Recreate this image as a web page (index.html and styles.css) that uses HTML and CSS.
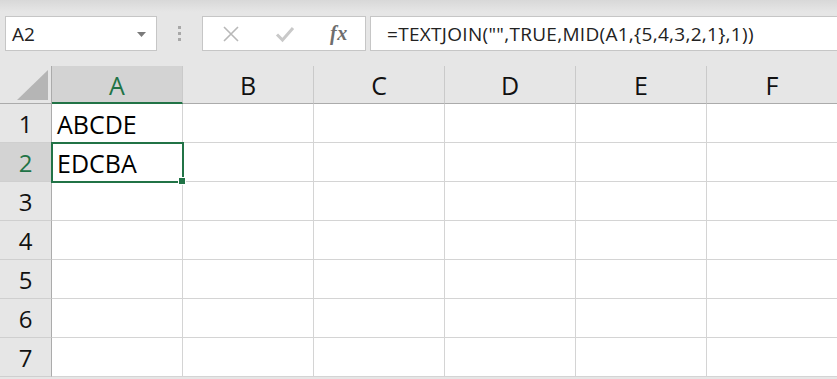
FILE: index.html
```html
<!DOCTYPE html>
<html>
<head>
<meta charset="utf-8">
<link rel="stylesheet" href="styles.css">
</head>
<body>
<div class="app">
  <div class="toolbar">
    <div class="namebox">
      <span class="name">A2</span>
      <svg class="dd" width="9" height="5" viewBox="0 0 9 5"><polygon points="0,0 9,0 4.5,5" fill="#7a7a7a"/></svg>
    </div>
    <div class="sep"><span></span><span></span><span></span></div>
    <div class="btns">
      <svg class="ic" width="18" height="18" viewBox="0 0 18 18"><path d="M2 2 L16 16 M16 2 L2 16" stroke="#b8b8b8" stroke-width="1.6" fill="none"/></svg>
      <svg class="ic" width="20" height="18" viewBox="0 0 20 18"><path d="M2 9.5 L7.5 15 L18 3" stroke="#c9c9c9" stroke-width="3" fill="none"/></svg>
      <span class="fx">fx</span>
    </div>
    <div class="formula">=TEXTJOIN("",TRUE,MID(A1,{5,4,3,2,1},1))</div>
  </div>
  <div class="grid">
    <div class="corner"><svg width="51" height="38" viewBox="0 0 51 38"><polygon points="17,34 48,34 48,4" fill="#b5b5b5"/></svg></div>
    <div class="ch sel">A</div>
    <div class="ch">B</div>
    <div class="ch">C</div>
    <div class="ch">D</div>
    <div class="ch">E</div>
    <div class="ch last">F</div>

    <div class="rh">1</div>
    <div class="c">ABCDE</div><div class="c"></div><div class="c"></div><div class="c"></div><div class="c"></div><div class="c last"></div>

    <div class="rh sel">2</div>
    <div class="c active">EDCBA<span class="handle"></span></div><div class="c"></div><div class="c"></div><div class="c"></div><div class="c"></div><div class="c last"></div>

    <div class="rh">3</div>
    <div class="c"></div><div class="c"></div><div class="c"></div><div class="c"></div><div class="c"></div><div class="c last"></div>

    <div class="rh">4</div>
    <div class="c"></div><div class="c"></div><div class="c"></div><div class="c"></div><div class="c"></div><div class="c last"></div>

    <div class="rh">5</div>
    <div class="c"></div><div class="c"></div><div class="c"></div><div class="c"></div><div class="c"></div><div class="c last"></div>

    <div class="rh">6</div>
    <div class="c"></div><div class="c"></div><div class="c"></div><div class="c"></div><div class="c"></div><div class="c last"></div>

    <div class="rh">7</div>
    <div class="c"></div><div class="c"></div><div class="c"></div><div class="c"></div><div class="c"></div><div class="c last"></div>
  </div>
</div>
</body>
</html>
```

FILE: styles.css
```css
* { box-sizing: border-box; }
html, body { margin: 0; padding: 0; }
body {
  width: 837px;
  height: 379px;
  overflow: hidden;
  background: #e6e6e6;
  font-family: "Open Sans", "Noto Sans", sans-serif;
}
.app { width: 837px; }
.toolbar {
  height: 66px;
  display: flex;
  align-items: flex-start;
  padding-top: 16px;
  padding-left: 5px;
  background: linear-gradient(#d8d8d8 0px, #e6e6e6 12px, #e6e6e6 100%);
}
.namebox {
  width: 152px;
  height: 35px;
  background: #fff;
  border: 1px solid #c6c6c6;
  display: flex;
  align-items: center;
  justify-content: space-between;
  padding: 0 10px 0 6px;
}
.name { font-size: 19px; color: #222; }
.dd { margin-top: 1px; }
.sep {
  width: 45px;
  height: 35px;
  display: flex;
  flex-direction: column;
  align-items: center;
  justify-content: center;
  gap: 3px;
}
.sep span { width: 3px; height: 3px; background: #a8a8a8; display: block; }
.btns {
  width: 164px;
  height: 35px;
  background: #fff;
  border: 1px solid #c6c6c6;
  display: flex;
  align-items: center;
  padding-left: 19px;
}
.btns .ic:nth-child(2) { margin-left: 35px; }
.fx {
  margin-left: 35px;
  font-family: "Liberation Serif", "DejaVu Serif", serif;
  font-style: italic;
  font-weight: bold;
  font-size: 20px;
  color: #6e6e6e;
  letter-spacing: 0.5px;
}
.formula {
  margin-left: 4px;
  flex: 1;
  height: 35px;
  background: #fff;
  border: 1px solid #c6c6c6;
  border-right: none;
  display: flex;
  align-items: center;
  padding-left: 16px;
  font-size: 19px;
  letter-spacing: 0.3px;
  color: #222;
  white-space: nowrap;
}
.grid {
  display: grid;
  grid-template-columns: 52px repeat(5, 131px) 130px;
  grid-template-rows: 38px repeat(7, 39px);
  background: #fff;
}
.corner {
  background: #e6e6e6;
  border-right: 1px solid #ababab;
  border-bottom: 1px solid #ababab;
  display: flex;
  align-items: flex-start;
}
.ch {
  background: #e6e6e6;
  border-right: 1px solid #cacaca;
  border-bottom: 1px solid #ababab;
  display: flex;
  align-items: center;
  justify-content: center;
  font-size: 25px;
  color: #111;
  padding-top: 1px;
}
.ch.sel {
  background: #d3d3d3;
  color: #217346;
  border-bottom: 2px solid #217346;
}
.rh {
  background: #e6e6e6;
  border-right: 1px solid #ababab;
  border-bottom: 1px solid #cfcfcf;
  display: flex;
  align-items: center;
  justify-content: center;
  font-size: 24px;
  color: #111;
}
.rh.sel { background: #d3d3d3; color: #217346; }
.c {
  border-right: 1px solid #d4d4d4;
  border-bottom: 1px solid #d4d4d4;
  font-size: 25px;
  color: #000;
  display: flex;
  align-items: flex-end;
  padding-left: 5px;
  padding-bottom: 1px;
  line-height: 34px;
  position: relative;
}
.c.last, .ch.last { border-right: none; }
.c.active {
  outline: 2px solid #217346;
  outline-offset: -1px;
  z-index: 1;
}
.handle {
  position: absolute;
  right: -4px;
  bottom: -4px;
  width: 6px;
  height: 6px;
  background: #217346;
  border: 1px solid #fff;
  box-sizing: content-box;
}
```
